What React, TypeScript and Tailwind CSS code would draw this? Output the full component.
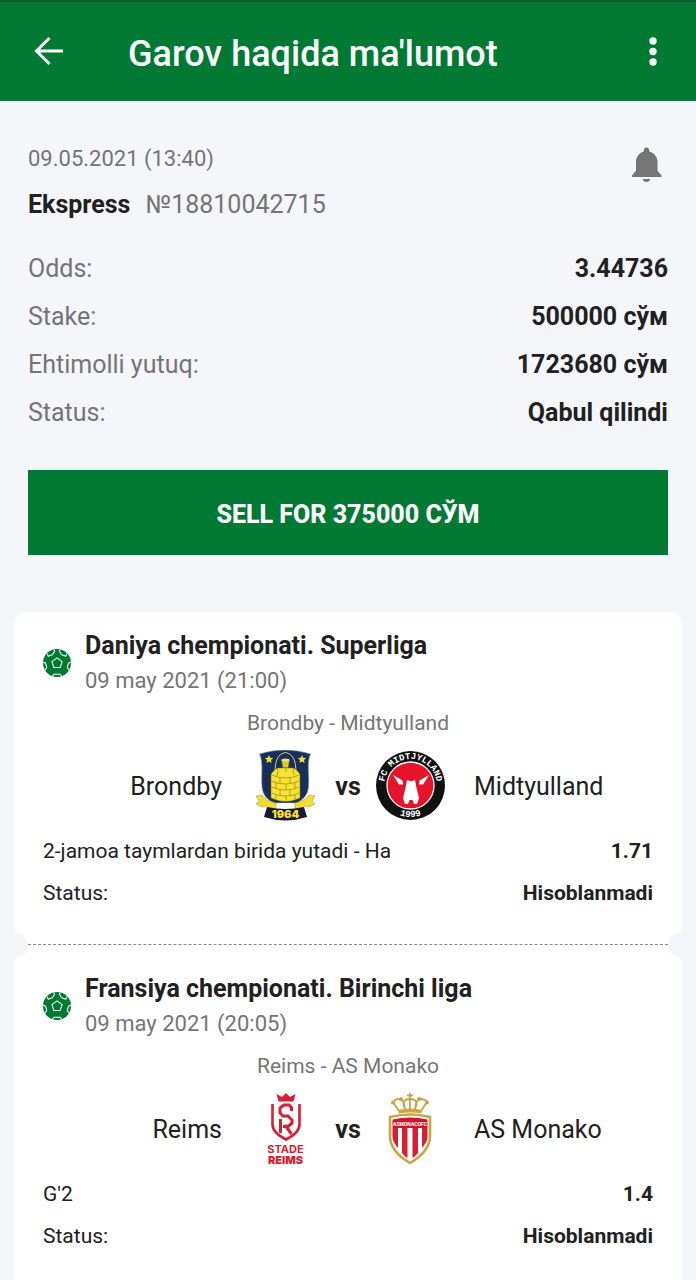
import type { ReactNode } from 'react';

type Match = {
    id: string;
    league: string;
    date: string;
    home: string;
    away: string;
    homeLogo: ReactNode;
    awayLogo: ReactNode;
    bet: string;
    odds: string;
    status: string;
};

function BackIcon() {
    return (
        <svg viewBox="0 0 30 30" className="size-[30px]" fill="none" stroke="currentColor" strokeWidth="3">
            <path d="M29 14H3M15.500 1L2.500 14l13 13" />
        </svg>
    );
}

function MoreIcon() {
    return (
        <svg viewBox="0 0 10 30" className="h-[30px] w-[10px]" fill="currentColor">
            <circle cx="5" cy="4" r="3.700" />
            <circle cx="5" cy="14.500" r="3.700" />
            <circle cx="5" cy="25" r="3.700" />
        </svg>
    );
}

function BellIcon() {
    return (
        <svg viewBox="0 0 30 36" className="h-9 w-[30px]" fill="currentColor">
            <path d="M14.500.5c1.500 0 2.700 1.200 2.700 2.800v1.100c4.800 1.300 8.300 5.300 8.300 10.200v9.200l4 4.700v1.500H0v-1.500l4-4.700v-9.200c0-4.900 3.300-8.900 7.800-10.200V3.300C11.800 1.700 13 .5 14.500.5z" />
            <path d="M10.800 32h7.400c-.3 1.900-1.800 3-3.700 3s-3.400-1.100-3.700-3z" />
        </svg>
    );
}

function BallIcon() {
    return (
        <svg viewBox="0 0 30 30" className="size-7 shrink-0">
            <circle cx="15" cy="15" r="15" fill="#007a33" />
            <g fill="none" stroke="#fff" strokeWidth="1.100" strokeLinejoin="round">
                <path d="M15 9.500l5.500 4-2.100 6.300h-6.800l-2.100-6.300z" />
                <path d="M4.500 5l1 2.700 4.500-1.500 2.500-3.700-1-2M25.500 5l-1 2.700-4.500-1.500-2.500-3.700 1-2" />
                <path d="M0 14l2.700 1.200 1.300 4.500-2 3M30 14l-2.700 1.200-1.300 4.500 2 3" />
                <path d="M10 29.500l1.500-2.500h7l1.500 2.500" />
            </g>
        </svg>
    );
}

function BrondbyLogo() {
    return (
        <svg viewBox="0 0 72 72" className="size-[72px]">
            <path d="M9.500 4q25.500-8 51 0c-4 9-1 20-2 33-1 9-6 13-12 16H24c-6-3-11-7-12-16-1-13 1.500-24-2.500-33z" fill="#17305a" stroke="#8995a5" strokeWidth=".6" />
            <path d="M19 5l1.200 2.700 3 .4-2.200 2 .6 3-2.600-1.500-2.600 1.500.6-3-2.200-2 3-.4zM52 5l1.200 2.700 3 .4-2.200 2 .6 3-2.600-1.500-2.600 1.500.6-3-2.200-2 3-.4z" fill="#f7dd32" />
            <path d="M25 23C25 10 28 4 35.500 2.500 43 4 46 10 46 23" fill="none" stroke="#d8cf86" strokeWidth="1" />
            <path d="M31.500 10h8l-1 8h-6z" fill="#dcc636" stroke="#3f4028" strokeWidth=".7" />
            <ellipse cx="35.500" cy="10" rx="4.200" ry="1.600" fill="#f5e352" />
            <path d="M21 25c0-2 4-6 7-7h15c3 1 7 5 7 7v23q-14.500 7-29 0z" fill="#fae232" stroke="#6b6830" strokeWidth=".5" />
            <path d="M21.500 25q14 6 28 0M21.500 31q14 6 28 0M21.500 37q14 6 28 0M21.500 43q14 6 28 0M28 19l-1 7m9-8v4m7-3l1 6M30 28v5m10-5v5M26 33v6m10-5v6m9-7v6M30 40v6m10-6v6M26 45v5m10-4v5m9-6v5" fill="none" stroke="#a08f26" strokeWidth=".8" />
            <path d="M6 46l6-1q4 6 14 8v8q-4-1-7-3l-3-2-4 1-6-3 3-3z" fill="#f3dc34" stroke="#a49332" strokeWidth=".5" />
            <path d="M65 46l-6-1q-4 6-14 8v8q4-1 7-3l3-2 4 1 6-3-3-3z" fill="#f3dc34" stroke="#a49332" strokeWidth=".5" />
            <path d="M27 53h17v6H27z" fill="#fff" />
            <path d="M17 57q18.500 4 37 0l3 10q-21.500 7-43 0z" fill="#171c35" />
            <text x="35.500" y="68" textAnchor="middle" fontSize="11" fontWeight="900" fill="#f7df36" className="font-['Inter',sans-serif]">
                1964
            </text>
        </svg>
    );
}

function MidtjyllandLogo() {
    return (
        <svg viewBox="0 0 72 72" className="size-[72px]">
            <circle cx="36.500" cy="35.500" r="34.500" fill="#111" />
            <circle cx="36.500" cy="35.500" r="23.500" fill="#e5142a" stroke="#fff" strokeWidth="1.300" />
            <path d="M33 30l3 1h2l3-1 1.500 8L45 48l-2 6h-3l-1.500-4h-3L34 54h-3l-2-6 2.500-10z" fill="#fff" />
            <path d="M19 25l9.500 5.500.5 4h-4zM55 25l-9.500 5.500-.5 4h4z" fill="#fff" />
            <path id="midtjylland-top" d="M10.500 40A26.400 26.400 0 1 1 62.500 40" fill="none" />
            <path id="midtjylland-bottom" d="M15 58.500A31.400 31.400 0 0 0 58 58.500" fill="none" />
            <g fill="#fff" fontSize="9" fontWeight="700" textAnchor="middle" className="font-['Liberation_Mono',monospace]">
                <text>
                    <textPath href="#midtjylland-top" startOffset="50%">
                        FC MIDTJYLLAND
                    </textPath>
                </text>
                <text>
                    <textPath href="#midtjylland-bottom" startOffset="50%">
                        1999
                    </textPath>
                </text>
            </g>
        </svg>
    );
}

function ReimsLogo() {
    return (
        <svg viewBox="0 0 72 72" className="size-[72px] overflow-visible">
            <path d="M26.500 1l5.500 3 4-4 4 4 5.500-3-2 7.500h-15z" fill="#d71e32" />
            <g fill="none" stroke="#d71e32">
                <path d="M22.500 11v20c0 7 5 11 13.500 15.500C44.500 42 49.500 38 49.500 31V11" strokeWidth="2.600" />
                <path d="M41.500 18v-3.500L39 12h-5l-4 3v5l3 3h5l4 4v3l-4 3.500h-5M30.500 26v14M35 32l6.500 9" strokeWidth="3" />
            </g>
            <g fill="#d71e32" fontSize="11" textAnchor="middle" className="font-['Inter',sans-serif]">
                <text x="35.500" y="60" fontWeight="700">
                    STADE
                </text>
                <text x="35.500" y="71" fontWeight="900">
                    REIMS
                </text>
            </g>
        </svg>
    );
}

function MonacoLogo() {
    return (
        <svg viewBox="0 0 72 72" className="size-[72px]">
            <g fill="none" stroke="#c9a548" strokeWidth="1.800">
                <path d="M25 18L19 9c4-5 9-3 11 1l1 7M47 18l6-9c-4-5-9-3-11 1l-1 7M36 6v11M32 17c-5-7-2-11 4-11s9 4 4 11" />
                <path d="M36 0v6M33 2.500h6" />
            </g>
            <path d="M24 17q12-3 24 0l-1 3.500q-11-2-22 0z" fill="#c9a548" />
            <g fill="#c9a548">
                <circle cx="19" cy="9.500" r="2" />
                <circle cx="27" cy="6" r="2" />
                <circle cx="45" cy="6" r="2" />
                <circle cx="53" cy="9.500" r="2" />
            </g>
            <path d="M16 24q20-5 40 0v19c0 12-8 20-20 27-12-7-20-15-20-27z" fill="#fff" stroke="#c9a548" strokeWidth="2.600" />
            <path d="M18.500 26.500q17.500-4 35 0V35h-35z" fill="#c9182b" />
            <path d="M18.500 35h5.500v20c-3-4-5.500-7-5.500-12zM28 35h5.500v30c-2-1-3.500-3-5.500-5zM38.500 35H44v25c-2 2-3.500 4-5.500 5zM48 35h5.500v8c0 5-2.500 8-5.500 12z" fill="#d71e32" />
            <text x="36" y="32.500" textAnchor="middle" fontSize="5" fontWeight="700" fill="#fff">
                ASMONACOFC
            </text>
        </svg>
    );
}

const summary = [
    { label: 'Odds:', value: '3.44736' },
    { label: 'Stake:', value: '500000 сўм' },
    { label: 'Ehtimolli yutuq:', value: '1723680 сўм' },
    { label: 'Status:', value: 'Qabul qilindi' },
];

const matches: Match[] = [
    {
        id: 'brondby-midtyulland',
        league: 'Daniya chempionati. Superliga',
        date: '09 may 2021 (21:00)',
        home: 'Brondby',
        away: 'Midtyulland',
        homeLogo: <BrondbyLogo />,
        awayLogo: <MidtjyllandLogo />,
        bet: '2-jamoa taymlardan birida yutadi - Ha',
        odds: '1.71',
        status: 'Hisoblanmadi',
    },
    {
        id: 'reims-monako',
        league: 'Fransiya chempionati. Birinchi liga',
        date: '09 may 2021 (20:05)',
        home: 'Reims',
        away: 'AS Monako',
        homeLogo: <ReimsLogo />,
        awayLogo: <MonacoLogo />,
        bet: "G'2",
        odds: '1.4',
        status: 'Hisoblanmadi',
    },
];

function Perforation() {
    return (
        <div className="relative mx-[14px] border-t border-dashed border-[#8a8a8a]">
            <span className="absolute -top-3 -left-6 size-6 rounded-full bg-[#f4f6fa]" />
            <span className="absolute -top-3 -right-6 size-6 rounded-full bg-[#f4f6fa]" />
        </div>
    );
}

function MatchCard({ match }: { match: Match }) {
    return (
        <article className="px-[29px] pb-[30px]">
            <div className="flex items-center gap-[14px]">
                <BallIcon />
                <div>
                    <h2 className="text-[25px] leading-9 font-bold">{match.league}</h2>
                    <p className="text-[22px] leading-[34px] text-[#757575]">{match.date}</p>
                </div>
            </div>
            <p className="mt-2 text-center text-[21px] leading-[34px] text-[#757575]">
                {match.home} - {match.away}
            </p>
            <div className="mt-[10px] flex items-center text-[25px] leading-[38px]">
                <p className="flex-1 pt-[2px] pr-7 text-right">{match.home}</p>
                {match.homeLogo}
                <span className="w-[52px] pt-[2px] text-center font-bold">vs</span>
                {match.awayLogo}
                <p className="flex-1 pt-[2px] pl-7">{match.away}</p>
            </div>
            <div className="mt-2 text-[21px] leading-[42px]">
                <div className="flex justify-between">
                    <span>{match.bet}</span>
                    <span className="font-bold">{match.odds}</span>
                </div>
                <div className="flex justify-between">
                    <span>Status:</span>
                    <span className="font-bold">{match.status}</span>
                </div>
            </div>
        </article>
    );
}

export default function App() {
    return (
        <div className="flex min-h-screen flex-col bg-[#f4f6fa] font-['Roboto',sans-serif] text-[#212121]">
            <header className="flex h-[101px] items-center border-t-2 border-[#1a5632] bg-[#007a33] px-[34px] text-white">
                <button type="button" aria-label="Orqaga">
                    <BackIcon />
                </button>
                <h1 className="ml-16 flex-1 pt-1 text-[36px] leading-10 font-medium">Garov haqida ma'lumot</h1>
                <button type="button" aria-label="Menyu" className="px-1">
                    <MoreIcon />
                </button>
            </header>

            <section className="px-7 pt-10">
                <div className="flex items-start justify-between">
                    <div>
                        <p className="text-[22px] leading-9 text-[#757575]">09.05.2021 (13:40)</p>
                        <p className="mt-2 text-[25px] leading-10">
                            <span className="mr-[15px] font-bold">Ekspress</span>
                            <span className="text-[#757575]">№18810042715</span>
                        </p>
                    </div>
                    <button type="button" aria-label="Bildirishnoma" className="mt-[6px] mr-[6px] text-[#757575]">
                        <BellIcon />
                    </button>
                </div>
                <dl className="mt-5 text-[25px] leading-[48px]">
                    {summary.map((row) => (
                        <div key={row.label} className="flex justify-between">
                            <dt className="text-[#757575]">{row.label}</dt>
                            <dd className="font-bold">{row.value}</dd>
                        </div>
                    ))}
                </dl>
                <button type="button" className="mt-[33px] h-[85px] w-full bg-[#007a33] pt-1 text-[25px] font-extrabold text-white">
                    SELL FOR 375000 СЎМ
                </button>
            </section>

            <main className="mx-[14px] mt-[57px] flex-1 rounded-t-xl bg-white pt-4">
                {matches.map((match, index) => (
                    <div key={match.id}>
                        {index > 0 && (
                            <div className="pb-[26px]">
                                <Perforation />
                            </div>
                        )}
                        <MatchCard match={match} />
                    </div>
                ))}
            </main>
        </div>
    );
}
